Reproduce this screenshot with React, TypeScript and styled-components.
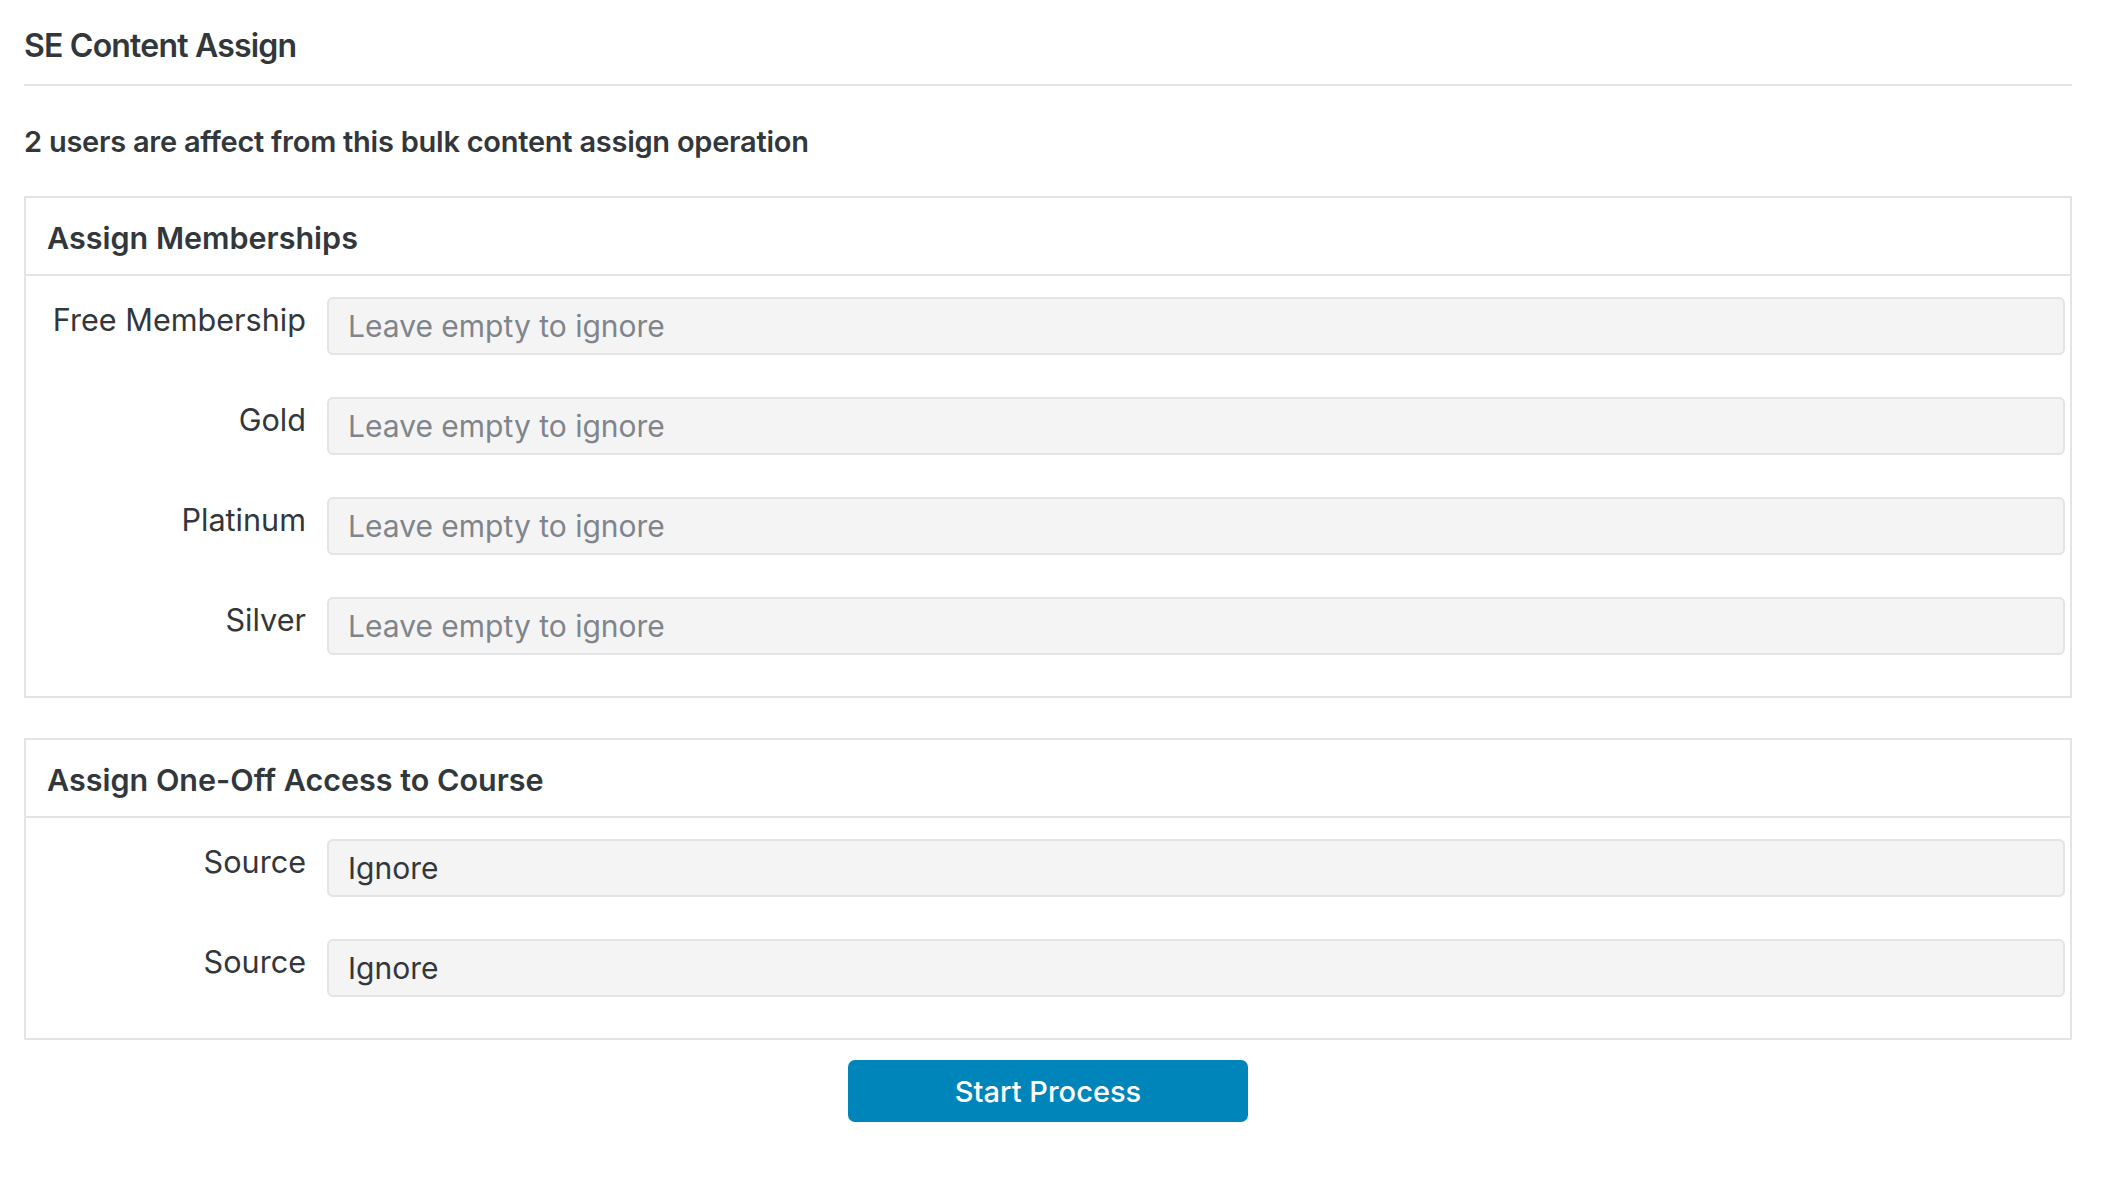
import React from "react";
import styled, { createGlobalStyle } from "styled-components";

const Global = createGlobalStyle`
  html, body { margin: 0; padding: 0; background: #ffffff; }
  body { font-family: Inter, "Noto Sans", "Liberation Sans", sans-serif; color: #32373c; }
  * { box-sizing: border-box; }
`;

const Page = styled.div`
  width: 2048px;
  margin-left: 24px;
  display: flex;
  flex-direction: column;
`;

const Title = styled.h1`
  margin: 0;
  padding-top: 24px;
  padding-bottom: 16px;
  font-size: 32px;
  font-weight: 600;
  letter-spacing: -0.8px;
  line-height: 44px;
  border-bottom: 2px solid #e2e4e7;
`;

const Notice = styled.p`
  margin: 0;
  padding-top: 38px;
  font-size: 29px;
  font-weight: 600;
  letter-spacing: -0.25px;
  line-height: 36px;
`;

const Panel = styled.section<{ $top: number }>`
  margin-top: ${(p) => p.$top}px;
  border: 2px solid #e2e4e7;
  display: flex;
  flex-direction: column;
`;

const PanelHeader = styled.h2`
  margin: 0;
  height: 78px;
  padding: 3px 21px 0;
  display: flex;
  align-items: center;
  font-size: 30.5px;
  font-weight: 600;
  border-bottom: 2px solid #e2e4e7;
`;

const PanelBody = styled.div`
  display: flex;
  flex-direction: column;
  padding-bottom: 20px;
`;

const Row = styled.div`
  display: grid;
  grid-template-columns: 280px 1fr;
  column-gap: 21px;
  align-items: start;
  height: 100px;
  padding-top: 21px;
  padding-right: 5px;
`;

const Label = styled.label`
  text-align: right;
  font-size: 30.6px;
  line-height: 36px;
  padding-top: 5px;
  white-space: nowrap;
`;

const Field = styled.div<{ $filled?: boolean }>`
  height: 58px;
  border: 2px solid #e2e4e7;
  border-radius: 6px;
  background: #f4f4f5;
  display: flex;
  align-items: center;
  padding: 0 19px;
  font-size: 30px;
  color: ${(p) => (p.$filled ? "#32373c" : "#80858c")};
`;

const Actions = styled.div`
  display: flex;
  justify-content: center;
  padding-top: 20px;
`;

const Button = styled.button`
  width: 400px;
  height: 62px;
  border: none;
  border-radius: 7px;
  background: #0085ba;
  color: #ffffff;
  font-family: Inter, "Noto Sans", "Liberation Sans", sans-serif;
  font-size: 29px;
  font-weight: 500;
  cursor: pointer;
`;

const memberships = ["Free Membership", "Gold", "Platinum", "Silver"];
const sources = ["Source", "Source"];

export default function App() {
  return (
    <>
      <Global />
      <Page>
        <Title>SE Content Assign</Title>
        <Notice>2 users are affect from this bulk content assign operation</Notice>
        <Panel $top={36}>
          <PanelHeader>Assign Memberships</PanelHeader>
          <PanelBody>
            {memberships.map((m) => (
              <Row key={m}>
                <Label>{m}</Label>
                <Field>Leave empty to ignore</Field>
              </Row>
            ))}
          </PanelBody>
        </Panel>
        <Panel $top={40}>
          <PanelHeader>Assign One-Off Access to Course</PanelHeader>
          <PanelBody>
            {sources.map((s, i) => (
              <Row key={i}>
                <Label>{s}</Label>
                <Field $filled>Ignore</Field>
              </Row>
            ))}
          </PanelBody>
        </Panel>
        <Actions>
          <Button>Start Process</Button>
        </Actions>
      </Page>
    </>
  );
}
